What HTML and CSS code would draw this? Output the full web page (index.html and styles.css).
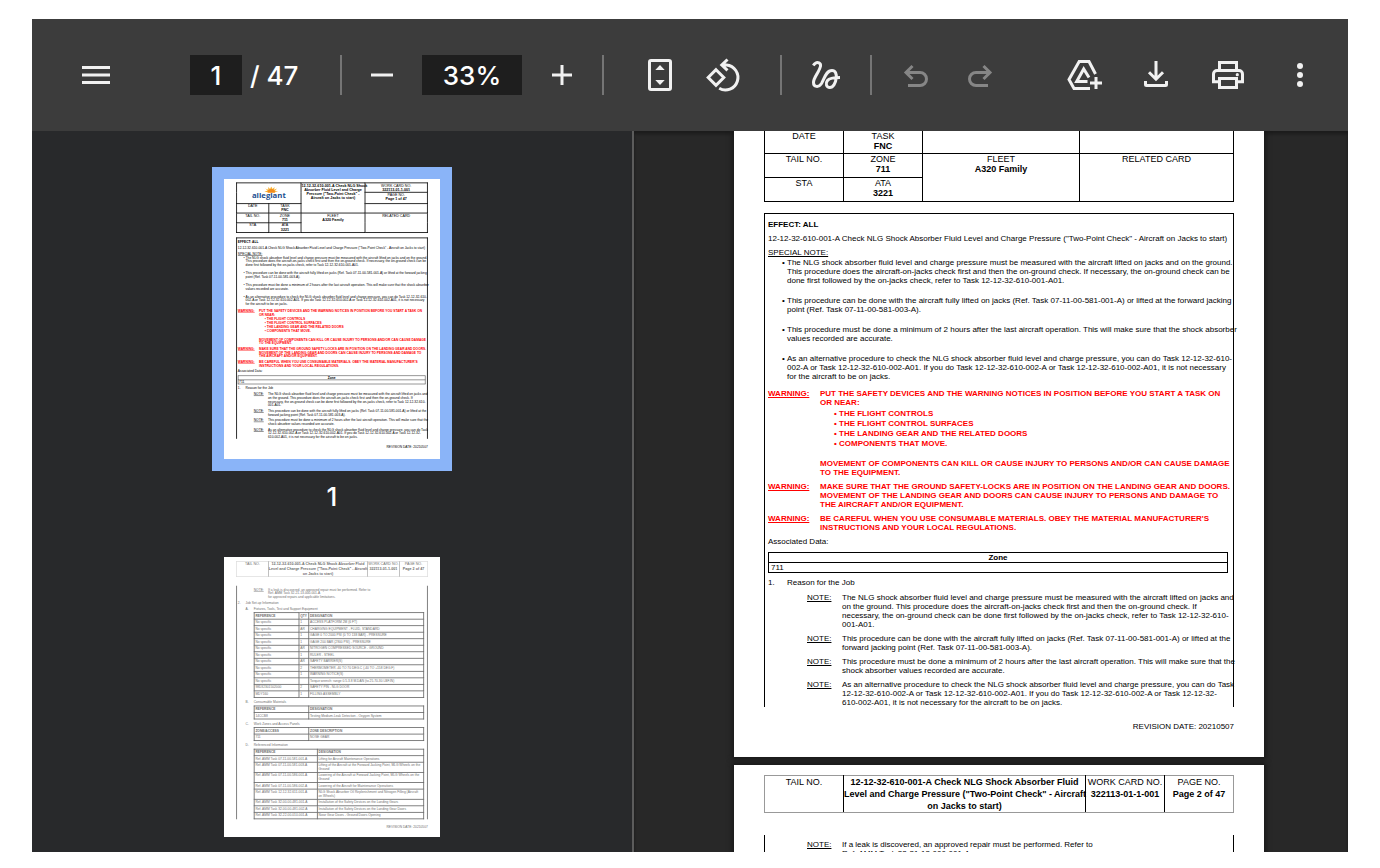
FILE: index.html
```html
<!DOCTYPE html>
<html lang="en">
<head>
<meta charset="utf-8">
<title>Work card 322113-01-1-001</title>
<link rel="stylesheet" href="styles.css">
</head>
<body>
<div class="viewer">
  <header class="toolbar">
    <button class="icon-btn" aria-label="Menu"><svg viewBox="0 0 40 40"><path class="solid" d="M6 11h28v3H6zM6 18.500h28v3H6zM6 26h28v3H6z"/></svg></button>
    <div class="pager">
      <input class="field page-field" type="text" value="1" aria-label="Page number">
      <span>/ 47</span>
    </div>
    <i class="divider"></i>
    <div class="zoomer">
      <button class="icon-btn" aria-label="Zoom out"><svg viewBox="0 0 40 40"><path class="solid" d="M9 18.500h22v3H9z"/></svg></button>
      <input class="field zoom-field" type="text" value="33%" aria-label="Zoom level">
      <button class="icon-btn" aria-label="Zoom in"><svg viewBox="0 0 40 40"><path class="solid" d="M10 18.500h8.500V10h3v8.500H30v3h-8.500V30h-3v-8.500H10z"/></svg></button>
    </div>
    <i class="divider"></i>
    <div class="tools tools-view">
      <button class="icon-btn" aria-label="Fit to page"><svg viewBox="0 0 40 40"><rect x="9.500" y="5.500" width="21" height="29" rx="1.500"/><path class="solid" d="M20 10l4.700 5h-9.400zM20 30l4.700-5h-9.400z"/></svg></button>
      <button class="icon-btn" aria-label="Rotate"><svg viewBox="0 0 40 40"><path d="M12 14.700l7.800 7.800-7.800 7.800-7.800-7.800z"/><path d="M23.500 4.500L17.800 10l5.700 5.300M18 10h4.500a12.500 12.500 0 1 1-7.300 23.300"/></svg></button>
    </div>
    <i class="divider"></i>
    <div class="tools">
      <button class="icon-btn" aria-label="Draw"><svg viewBox="0 0 40 40"><path d="M7.300 10.500C9 8 11 6.900 13 7.800c3 1.500 1.200 5-.8 9C9.800 21 7.500 24 7.500 27.500c0 4.500 5 5.500 8 1C18.500 23.500 20 15.500 26 15.500c3.500 0 4.700 3.500 4.200 7.500-.5 5-3 9.500-6.400 9.500s-4.700-4-2.300-7c2-2.500 5.500-3 12.500-3"/></svg></button>
    </div>
    <i class="divider"></i>
    <div class="tools">
      <button class="icon-btn" aria-label="Undo" disabled><svg viewBox="0 0 40 40"><path d="M16.500 11L10 17.500l6.500 6.500M10.500 17.500h13.500a6.500 6.500 0 0 1 0 13H12"/></svg></button>
      <button class="icon-btn" aria-label="Redo" disabled><svg viewBox="0 0 40 40"><path d="M23.500 11L30 17.500 23.500 24M29.500 17.500H16a6.500 6.500 0 0 0 0 13h12"/></svg></button>
    </div>
    <div class="tools tools-end">
      <button class="icon-btn" aria-label="Save to Drive"><svg viewBox="0 0 40 40"><path d="M31.500 19L25 6.600H15.200L5 24.600l5 8.900h16"/><path d="M25 22.500l-5.300-8.500-7 12.500H23.500M26 28h12M32 22v12"/></svg></button>
      <button class="icon-btn" aria-label="Download"><svg viewBox="0 0 40 40"><path d="M20 6v18M13 17.200l7 7 7-7M9.500 26v3.500a1 1 0 0 0 1 1h19a1 1 0 0 0 1-1V26"/></svg></button>
      <button class="icon-btn" aria-label="Print"><svg viewBox="0 0 40 40"><path d="M11.500 15.500v-8h17v8M11.500 26.800h-6V19A3.500 3.500 0 0 1 9 15.500h22a3.500 3.500 0 0 1 3.500 3.500v7.800h-6M11.500 23.500h17v9h-17z"/><circle class="solid" cx="29.300" cy="19.700" r="1.600"/></svg></button>
      <button class="icon-btn" aria-label="More actions"><svg viewBox="0 0 40 40"><g class="solid"><circle cx="20" cy="11" r="3"/><circle cx="20" cy="20" r="3"/><circle cx="20" cy="29" r="3"/></g></svg></button>
    </div>
  </header>

  <div class="workspace">
    <nav class="sidebar" aria-label="Thumbnails">
      <a class="thumb selected" href="#page-1"><svg viewBox="0 0 530 686" data-page="page-1"><foreignObject width="530" height="686"></foreignObject></svg></a>
      <span class="thumb-label">1</span>
      <a class="thumb faded" href="#page-2"><svg viewBox="0 0 530 686" data-page="page-2"><foreignObject width="530" height="686"></foreignObject></svg></a>
    </nav>

    <main class="document">
      <section class="page" id="page-1">
        <table class="card-head">
          <colgroup><col class="c-a"><col class="c-a"><col class="c-b"><col></colgroup>
          <tr class="r-card">
            <td colspan="2" rowspan="2" class="brand">
              <svg viewBox="0 0 100 34" class="logo">
                <path class="ray" d="M48 14l-9-1 8-3-6-5 8 3-1-7 5 5 3-6 3 6 5-5-1 7 7-3-5 6 8 2-9 1z"/>
                <path class="sun" d="M47 15a9 9 0 0 1 18 0z"/>
                <text x="50" y="28" text-anchor="middle">allegiant</text>
              </svg>
            </td>
            <td rowspan="3"><b>12-12-32-610-001-A Check NLG Shock<br>Absorber Fluid Level and Charge<br>Pressure ("Two-Point Check" -<br>Aircraft on Jacks to start)</b></td>
            <td>WORK CARD NO.<br><b>322113-01-1-001</b></td>
          </tr>
          <tr class="r-page"><td>PAGE NO.<br><b>Page 1 of 47</b></td></tr>
          <tr class="r-date"><td>DATE</td><td>TASK<br><b>FNC</b></td><td></td></tr>
          <tr class="r-info"><td>TAIL NO.</td><td>ZONE<br><b>711</b></td><td rowspan="2">FLEET<br><b>A320 Family</b></td><td rowspan="2">RELATED CARD</td></tr>
          <tr class="r-info"><td>STA</td><td>ATA<br><b>3221</b></td></tr>
        </table>

        <div class="body-box boxed">
          <p class="lead"><b>EFFECT: ALL</b></p>
          <p class="lead">12-12-32-610-001-A Check NLG Shock Absorber Fluid Level and Charge Pressure ("Two-Point Check" - Aircraft on Jacks to start)</p>
          <p class="special"><u>SPECIAL NOTE:</u></p>
          <ul class="bullets spaced">
            <li>The NLG shock absorber fluid level and charge pressure must be measured with the aircraft lifted on jacks and on the ground.<br>This procedure does the aircraft-on-jacks check first and then the on-ground check. If necessary, the on-ground check can be<br>done first followed by the on-jacks check, refer to Task 12-12-32-610-001-A01.</li>
            <li>This procedure can be done with the aircraft fully lifted on jacks (Ref. Task 07-11-00-581-001-A) or lifted at the forward jacking<br>point (Ref. Task 07-11-00-581-003-A).</li>
            <li>This procedure must be done a minimum of 2 hours after the last aircraft operation. This will make sure that the shock absorber<br>values recorded are accurate.</li>
            <li>As an alternative procedure to check the NLG shock absorber fluid level and charge pressure, you can do Task 12-12-32-610-<br>002-A or Task 12-12-32-610-002-A01. If you do Task 12-12-32-610-002-A or Task 12-12-32-610-002-A01, it is not necessary<br>for the aircraft to be on jacks.</li>
          </ul>
          <div class="warning"><u>WARNING:</u>
            <div>
              <p>PUT THE SAFETY DEVICES AND THE WARNING NOTICES IN POSITION BEFORE YOU START A TASK ON<br>OR NEAR:</p>
              <ul class="bullets">
                <li>THE FLIGHT CONTROLS</li>
                <li>THE FLIGHT CONTROL SURFACES</li>
                <li>THE LANDING GEAR AND THE RELATED DOORS</li>
                <li>COMPONENTS THAT MOVE.</li>
              </ul>
              <p>MOVEMENT OF COMPONENTS CAN KILL OR CAUSE INJURY TO PERSONS AND/OR CAN CAUSE DAMAGE<br>TO THE EQUIPMENT.</p>
            </div>
          </div>
          <div class="warning"><u>WARNING:</u><p>MAKE SURE THAT THE GROUND SAFETY-LOCKS ARE IN POSITION ON THE LANDING GEAR AND DOORS.<br>MOVEMENT OF THE LANDING GEAR AND DOORS CAN CAUSE INJURY TO PERSONS AND DAMAGE TO<br>THE AIRCRAFT AND/OR EQUIPMENT.</p></div>
          <div class="warning"><u>WARNING:</u><p>BE CAREFUL WHEN YOU USE CONSUMABLE MATERIALS. OBEY THE MATERIAL MANUFACTURER'S<br>INSTRUCTIONS AND YOUR LOCAL REGULATIONS.</p></div>
          <p class="assoc">Associated Data:</p>
          <table class="zone"><tr><th>Zone</th></tr><tr><td>711</td></tr></table>
          <div class="step"><span>1.</span><span>Reason for the Job</span></div>
          <div class="note"><u>NOTE:</u><p>The NLG shock absorber fluid level and charge pressure must be measured with the aircraft lifted on jacks and<br>on the ground. This procedure does the aircraft-on-jacks check first and then the on-ground check. If<br>necessary, the on-ground check can be done first followed by the on-jacks check, refer to Task 12-12-32-610-<br>001-A01.</p></div>
          <div class="note"><u>NOTE:</u><p>This procedure can be done with the aircraft fully lifted on jacks (Ref. Task 07-11-00-581-001-A) or lifted at the<br>forward jacking point (Ref. Task 07-11-00-581-003-A).</p></div>
          <div class="note"><u>NOTE:</u><p>This procedure must be done a minimum of 2 hours after the last aircraft operation. This will make sure that the<br>shock absorber values recorded are accurate.</p></div>
          <div class="note"><u>NOTE:</u><p>As an alternative procedure to check the NLG shock absorber fluid level and charge pressure, you can do Task<br>12-12-32-610-002-A or Task 12-12-32-610-002-A01. If you do Task 12-12-32-610-002-A or Task 12-12-32-<br>610-002-A01, it is not necessary for the aircraft to be on jacks.</p></div>
        </div>
        <p class="revision">REVISION DATE: 20210507</p>
      </section>

      <section class="page" id="page-2">
        <table class="run-head">
          <colgroup><col class="w-tail"><col><col class="w-card"><col class="w-page"></colgroup>
          <tr>
            <td>TAIL NO.</td>
            <td><b>12-12-32-610-001-A Check NLG Shock Absorber Fluid<br>Level and Charge Pressure ("Two-Point Check" - Aircraft<br>on Jacks to start)</b></td>
            <td>WORK CARD NO.<br><b>322113-01-1-001</b></td>
            <td>PAGE NO.<br><b>Page 2 of 47</b></td>
          </tr>
        </table>
        <div class="body-box">
          <div class="note"><u>NOTE:</u><p>If a leak is discovered, an approved repair must be performed. Refer to<br>Ref. AMM Task 32-21-13-000-001-A<br>for approved repairs and applicable limitations.</p></div>
          <div class="step"><span>2.</span><span>Job Set-up Information</span></div>
          <div class="substep"><span>A.</span><span>Fixtures, Tools, Test and Support Equipment</span></div>
          <table class="parts">
            <tr><th class="p-ref">REFERENCE</th><th class="p-qty">QTY</th><th>DESIGNATION</th></tr>
            <tr><td>No specific</td><td>1</td><td>ACCESS PLATFORM 2M (6 FT)</td></tr>
            <tr><td>No specific</td><td>AR</td><td>CHARGING EQUIPMENT - FLUID, STANDARD</td></tr>
            <tr><td>No specific</td><td>1</td><td>GAGE 0 TO 2000 PSI (0 TO 138 BAR) - PRESSURE</td></tr>
            <tr><td>No specific</td><td>1</td><td>GAGE 200 BAR (2900 PSI) - PRESSURE</td></tr>
            <tr><td>No specific</td><td>AR</td><td>NITROGEN COMPRESSED SOURCE - GROUND</td></tr>
            <tr><td>No specific</td><td>1</td><td>RULER - STEEL</td></tr>
            <tr><td>No specific</td><td>AR</td><td>SAFETY BARRIER(S)</td></tr>
            <tr><td>No specific</td><td>2</td><td>THERMOMETER -40 TO 70 DEG.C (-40 TO +158 DEG.F)</td></tr>
            <tr><td>No specific</td><td>1</td><td>WARNING NOTICE(S)</td></tr>
            <tr><td>No specific</td><td></td><td>Torque wrench: range 0.5-3.8 M.DAN (to 25.70-30 LBF.IN)</td></tr>
            <tr><td>98D32301502000</td><td>2</td><td>SAFETY PIN - NLG DOOR</td></tr>
            <tr><td>MDY160</td><td>1</td><td>FILLING ASSEMBLY</td></tr>
          </table>
          <div class="substep"><span>B.</span><span>Consumable Materials</span></div>
          <table class="parts">
            <tr><th class="p-wide">REFERENCE</th><th>DESIGNATION</th></tr>
            <tr><td>14CCB8</td><td>Testing Medium-Leak Detection - Oxygen System</td></tr>
          </table>
          <div class="substep"><span>C.</span><span>Work Zones and Access Panels</span></div>
          <table class="parts">
            <tr><th class="p-wide">ZONE/ACCESS</th><th>ZONE DESCRIPTION</th></tr>
            <tr><td>711</td><td>NOSE GEAR</td></tr>
          </table>
          <div class="substep"><span>D.</span><span>Referenced Information</span></div>
          <table class="parts">
            <tr><th class="p-task">REFERENCE</th><th>DESIGNATION</th></tr>
            <tr><td>Ref. AMM Task 07-11-00-581-001-A</td><td>Lifting for Aircraft Maintenance Operations</td></tr>
            <tr><td>Ref. AMM Task 07-11-00-581-003-A</td><td>Lifting of the Aircraft at the Forward Jacking Point, MLG Wheels on the<br>Ground</td></tr>
            <tr><td>Ref. AMM Task 07-11-00-586-001-A</td><td>Lowering of the Aircraft at Forward Jacking Point, MLG Wheels on the<br>Ground</td></tr>
            <tr><td>Ref. AMM Task 07-11-00-586-002-A</td><td>Lowering of the Aircraft for Maintenance Operations</td></tr>
            <tr><td>Ref. AMM Task 12-12-32-611-001-A</td><td>NLG Shock Absorber Oil Replenishment and Nitrogen Filling (Aircraft<br>on Wheels)</td></tr>
            <tr><td>Ref. AMM Task 32-00-00-481-001-A</td><td>Installation of the Safety Devices on the Landing Gears</td></tr>
            <tr><td>Ref. AMM Task 32-00-00-481-002-A</td><td>Installation of the Safety Devices on the Landing Gear Doors</td></tr>
            <tr><td>Ref. AMM Task 32-22-00-010-001-A</td><td>Nose Gear Doors - Ground Doors Opening</td></tr>
          </table>
        </div>
        <p class="revision">REVISION DATE: 20210507</p>
      </section>
    </main>
  </div>
</div>
<script src="viewer.js"></script>
</body>
</html>
```
FILE: styles.css
```css
* { box-sizing: border-box; }
body { margin: 0; padding: 19px 32px 16px; background: #fff; font-family: Inter, "Liberation Sans", sans-serif; }
p, ul { margin: 0; padding: 0; }
ul { list-style: none; }
table { border-collapse: collapse; border-spacing: 0; }

.viewer { display: flex; flex-direction: column; height: calc(100vh - 35px); background: #28292b; overflow: hidden; }

/* Toolbar */
.toolbar { display: flex; align-items: center; flex: none; height: 112px; padding: 0 28px 0 44px; background: #3c3c3c; color: #fff; font-size: 26px; }
.icon-btn { flex: none; width: 40px; height: 40px; padding: 0; border: 0; background: none; color: #f1f1f1; }
.icon-btn:disabled { color: #868686; }
.icon-btn svg { display: block; width: 40px; height: 40px; fill: none; stroke: currentColor; stroke-width: 3; }
.icon-btn .solid { fill: currentColor; stroke: none; }
.field { height: 40px; padding: 0; border: 0; background: #1e1e1e; color: #fff; font: inherit; font-weight: 500; text-align: center; }
.pager { display: flex; align-items: center; gap: 8px; width: 110px; margin: 0 40px 0 74px; font-weight: 500; white-space: nowrap; }
.page-field { width: 52px; }
.zoom-field { width: 100px; }
.zoomer { display: flex; gap: 20px; margin: 0 20px; }
.divider { flex: none; width: 2px; height: 40px; background: #757575; }
.tools { display: flex; gap: 24px; margin: 0 24px; }
.tools-view { margin: 0 36px; }
.tools-end { gap: 32px; margin: 0 0 0 auto; }

.workspace { display: flex; flex: 1; min-height: 0; }

/* Thumbnails */
.sidebar { display: flex; flex-direction: column; align-items: center; flex: none; width: 602px; padding-top: 36px; border-right: 2px solid #5c5c5c; overflow: hidden; }
.thumb { flex: none; border: 12px solid transparent; color: #000; text-decoration: none; }
.thumb svg { display: block; }
.thumb > svg { width: 216px; height: 280px; background: #fff; }
.thumb.selected { border-color: #8ab4f8; }
.thumb.faded foreignObject { opacity: 0.6; }
.thumb-label { flex: none; margin-bottom: 22px; color: #fff; font-size: 26px; font-weight: 500; line-height: 52px; }

/* Document */
.document { flex: 1; padding: 8px 84px 0 100px; background: #282828; overflow: auto; scrollbar-width: none; box-shadow: inset 0 3px 3px #1c1c1c; }
.page { width: 530px; margin-bottom: 8px; background: #fff; box-shadow: 0 0 5px 2px #181818; }
.page, .sheet { height: 686px; padding: 8px 30px 0; color: #000; font-family: "Liberation Sans", Arial, sans-serif; font-size: 8px; line-height: 9px; white-space: nowrap; overflow: hidden; }

.card-head { table-layout: fixed; width: 470px; font-size: 9px; line-height: 10px; text-align: center; }
.card-head td { padding: 0; border: 1px solid #000; vertical-align: top; }
.c-a { width: 79px; }
.c-b { width: 157px; }
.r-card { height: 23px; }
.r-page { height: 28px; }
.r-date { height: 23px; }
.r-info { height: 24px; }
.card-head .brand { vertical-align: middle; }
.logo { display: block; width: 100px; height: 34px; margin: 0 auto; }
.logo text { fill: #1c4f91; font-family: "Open Sans", sans-serif; font-size: 19px; font-weight: 700; }
.logo .ray { fill: #f9b233; }
.logo .sun { fill: #f28c1b; }

.body-box { width: 470px; padding: 5px 5px 0 3px; border: solid #000; border-width: 0 1px; }
.body-box.boxed { margin-top: 11px; padding-top: 6px; border-top-width: 1px; }
.lead { margin-bottom: 5px; }
.special { margin-bottom: 1px; }
.bullets { padding-left: 14px; }
.bullets li { position: relative; padding-left: 5px; }
.bullets li::before { content: "•"; position: absolute; left: 0; }
.spaced { margin-bottom: 8px; }
.spaced li + li { margin-top: 11px; }
.warning { display: flex; margin-bottom: 5px; color: #f00; font-weight: 700; }
.warning > u { flex: none; width: 52px; }
.warning .bullets { margin: 2px 0 10px; line-height: 10px; }
.assoc { margin: 0 0 6px; }
.zone { width: 100%; }
.zone th, .zone td { padding: 0 2px; border: 1px solid #000; line-height: 9px; }
.zone td { text-align: left; }
.step { display: flex; margin: 5px 0 6px; }
.step span:first-child { width: 19px; }
.note { display: flex; margin: 0 0 5px 39px; }
.note > u { flex: none; width: 35px; }
.boxed .note:last-child { margin-bottom: 0; }
.revision { margin: 15px 0 0; text-align: right; }

.run-head { table-layout: fixed; width: 470px; margin: 2px 0 22px; font-size: 9px; line-height: 12px; text-align: center; }
.run-head td { height: 36px; padding: 0; border: 1px solid #000; border-top-color: #999; border-bottom-color: #999; vertical-align: top; }
.run-head td:first-child { border-left-color: #999; }
.run-head td:last-child { border-right-color: #999; }
.w-tail { width: 79px; }
.w-card { width: 79px; }
.w-page { width: 69px; }
.substep { display: flex; margin: 6px 0 4px 19px; }
.substep span:first-child { width: 20px; }
.parts { width: 418px; margin-left: 39px; }
.parts th, .parts td { padding: 3px 2px; border: 1px solid #000; text-align: left; vertical-align: top; }
.p-ref { width: 110px; }
.p-qty { width: 24px; }
.p-wide { width: 134px; }
.p-task { width: 155px; }

/* Heavier rules keep the frames legible at thumbnail size */
.sheet .card-head td { border-width: 2px; }
.sheet .body-box { padding-left: 2px; padding-right: 4px; border-left-width: 2px; border-right-width: 2px; }
.sheet .boxed { padding-top: 5px; border-top-width: 2px; }
.sheet .parts th, .sheet .parts td { padding: 2px 2px 3px; border-width: 2px; }
```
FILE: viewer.js
```js
// Each thumbnail shows a reduced copy of its page.
document.querySelectorAll(".thumb svg[data-page]").forEach(function (svg) {
  var sheet = document.createElement("div");
  sheet.className = "sheet";
  sheet.innerHTML = document.getElementById(svg.dataset.page).innerHTML;
  svg.querySelector("foreignObject").appendChild(sheet);
});

document.querySelector(".document").scrollTop = 68;
```
